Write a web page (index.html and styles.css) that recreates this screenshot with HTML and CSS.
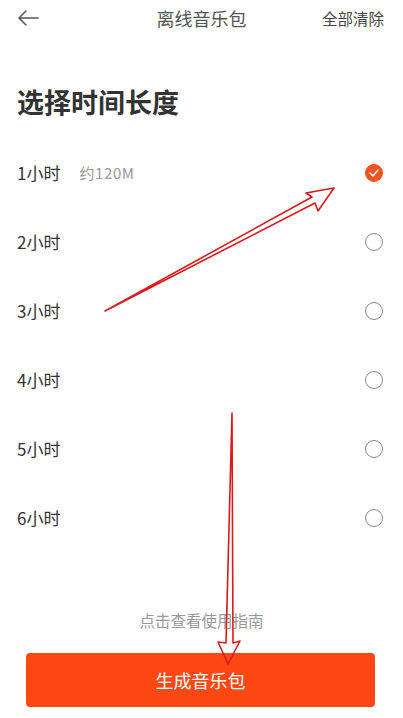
FILE: index.html
```html
<!DOCTYPE html>
<html lang="zh">
<head>
<meta charset="utf-8">
<link rel="stylesheet" href="styles.css">
</head>
<body>
<div class="page">
  <header class="topbar">
    <svg class="back" width="22" height="16" viewBox="0 0 22 16"><path d="M21 8H2M9 1L2 8l7 7" fill="none" stroke="#555" stroke-width="1.5" stroke-linecap="round" stroke-linejoin="round"/></svg>
    <div class="title">离线音乐包</div>
    <div class="clear">全部清除</div>
  </header>
  <h1 class="heading">选择时间长度</h1>
  <ul class="list">
    <li class="row"><span class="label">1小时</span><span class="size">约120M</span><span class="radio checked"><svg width="10" height="8" viewBox="0 0 10 8"><path d="M1 4l3 3 5-6" fill="none" stroke="#fff" stroke-width="1.6" stroke-linecap="round" stroke-linejoin="round"/></svg></span></li>
    <li class="row"><span class="label">2小时</span><span class="radio"></span></li>
    <li class="row"><span class="label">3小时</span><span class="radio"></span></li>
    <li class="row"><span class="label">4小时</span><span class="radio"></span></li>
    <li class="row"><span class="label">5小时</span><span class="radio"></span></li>
    <li class="row"><span class="label">6小时</span><span class="radio"></span></li>
  </ul>
  <div class="guide">点击查看使用指南</div>
  <button class="generate">生成音乐包</button>
  <svg class="arrows" width="403" height="718" viewBox="0 0 403 718">
    <polygon points="334,188 306,193 312,197 105,311 315,203 318,211" fill="none" stroke="#d9191c" stroke-width="1.6" stroke-linejoin="round"/>
    <polygon points="232,413 226,643 218,642 228,664 240,641 233,643" fill="none" stroke="#d9191c" stroke-width="1.6" stroke-linejoin="round"/>
  </svg>
</div>
</body>
</html>
```
FILE: styles.css
```css
* { box-sizing: border-box; }
html, body { margin: 0; padding: 0; background: #fff; }
body { font-family: "Noto Sans CJK SC", "Noto Sans", sans-serif; color: #333; }
.page { position: relative; width: 403px; height: 718px; overflow: hidden; }
.topbar { height: 36px; display: flex; align-items: center; padding: 0 19px 0 17px; position: relative; }
.back { display: block; }
.title { position: absolute; left: 0; right: 0; text-align: center; font-size: 18px; color: #555; pointer-events: none; }
.clear { margin-left: auto; font-size: 15.5px; color: #444; }
.heading { margin: 48px 0 0 17px; font-size: 27px; line-height: 36px; font-weight: 700; color: #333; }
.list { list-style: none; margin: 18px 0 0; padding: 0; }
.row { height: 69px; display: flex; align-items: center; padding: 0 20px 0 17px; }
.label { font-size: 17px; color: #333; }
.size { margin-left: 19px; font-size: 15px; letter-spacing: 0.6px; color: #999; }
.radio { margin-left: auto; width: 18px; height: 18px; border-radius: 50%; border: 1.3px solid #888; display: flex; align-items: center; justify-content: center; }
.radio.checked { background: #f0531f; border-color: #f0531f; }
.radio svg { display: block; }
.guide { margin-top: 58px; text-align: center; font-size: 15.5px; line-height: 20px; color: #999; }
.generate { display: block; margin: 23px 0 0 26px; width: 349px; height: 54px; border: none; border-radius: 4px; background: #fe4814; color: #fff; font-family: inherit; font-size: 18px; }
.arrows { position: absolute; left: 0; top: 0; pointer-events: none; }
```
